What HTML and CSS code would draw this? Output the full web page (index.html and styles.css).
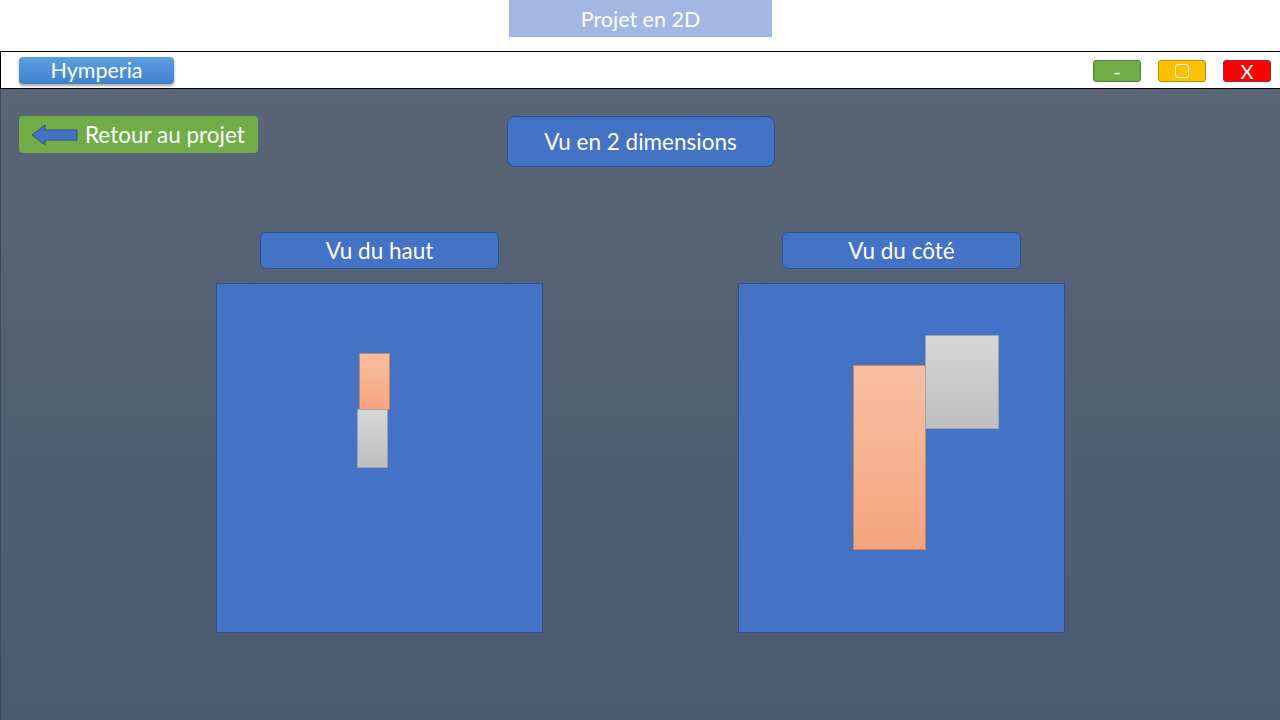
FILE: index.html
```html
<!DOCTYPE html>
<html lang="fr">
<head>
<meta charset="utf-8">
<title>Projet en 2D</title>
<link rel="stylesheet" href="styles.css">
</head>
<body>
<div class="top">
  <div class="page-title">Projet en 2D</div>
</div>
<header class="appbar">
  <div class="brand">Hymperia</div>
  <div class="win-controls">
    <div class="wbtn wbtn-min">-</div>
    <div class="wbtn wbtn-max"><span class="sq"></span></div>
    <div class="wbtn wbtn-close">X</div>
  </div>
</header>
<main class="main">
  <div class="toprow">
    <div class="back">
      <svg class="arrow" width="48" height="22" viewBox="0 0 48 22">
        <path d="M1 11 L14 1 L14 6 L46 6 L46 16 L14 16 L14 21 Z" fill="#4472c4" stroke="#2f528f" stroke-width="1"/>
      </svg>
      <span>Retour au projet</span>
    </div>
    <div class="heading">Vu en 2 dimensions</div>
    <div></div>
  </div>
  <div class="views">
    <section class="view">
      <div class="view-title">Vu du haut</div>
      <div class="canvas">
        <div class="shape orange" style="left:142px;top:69px;width:31px;height:57px"></div>
        <div class="shape gray" style="left:140px;top:125px;width:31px;height:59px"></div>
      </div>
    </section>
    <section class="view">
      <div class="view-title">Vu du côté</div>
      <div class="canvas">
        <div class="shape orange" style="left:114px;top:81px;width:73px;height:185px"></div>
        <div class="shape gray" style="left:186px;top:51px;width:74px;height:94px"></div>
      </div>
    </section>
  </div>
</main>
</body>
</html>
```
FILE: styles.css
```css
html, body {
  margin: 0;
  padding: 0;
  height: 100%;
}
body {
  font-family: "Lato", "Open Sans", sans-serif;
  background: #fff;
  overflow: hidden;
  display: flex;
  flex-direction: column;
}
.top {
  height: 51px;
  display: flex;
  justify-content: center;
}
.page-title {
  width: 263px;
  height: 37px;
  margin-left: 1px;
  background: #a2b7e1;
  color: #fff;
  font-size: 21.5px;
  display: flex;
  align-items: center;
  justify-content: center;
}
.appbar {
  height: 36px;
  border-top: 1px solid #000;
  border-bottom: 1px solid #000;
  border-left: 1px solid #000;
  display: flex;
  align-items: center;
  justify-content: space-between;
  padding: 0 9px 0 18px;
  background: #fff;
}
.brand {
  width: 155px;
  height: 27px;
  margin-top: 0;
  border-radius: 4px;
  background: linear-gradient(#5d9ee0, #3f83cc);
  box-shadow: 0 2px 3px rgba(0,0,0,0.35);
  color: #fff;
  font-size: 21.5px;
  display: flex;
  align-items: center;
  justify-content: center;
}
.win-controls {
  display: flex;
  gap: 17px;
  margin-top: 1px;
}
.wbtn {
  width: 46px;
  height: 20px;
  border-radius: 3px;
  color: #fff;
  font-size: 20px;
  display: flex;
  align-items: center;
  justify-content: center;
}
.wbtn-min { background: #70ad47; border: 1px solid #507e32; }
.wbtn-max { background: #ffc000; border: 1px solid #bc8c00; }
.wbtn-close { background: #ff0000; border: 1px solid #9e2a48; }
.sq {
  width: 12px;
  height: 12px;
  border: 1.5px solid #fff;
  border-radius: 3px;
}
.main {
  flex: 1;
  background: linear-gradient(#5a6577, #4a5a70);
  border-left: 1px solid #3b4a5e;
  padding: 27px 0 0 18px;
  display: flex;
  flex-direction: column;
}
.toprow {
  display: grid;
  grid-template-columns: 1fr 268px 1fr;
  align-items: start;
  padding-right: 18px;
}
.back {
  justify-self: start;
  width: 239px;
  height: 37px;
  border-radius: 4px;
  background: #70ad47;
  color: #fff;
  font-size: 22.5px;
  display: flex;
  align-items: center;
  gap: 6px;
  padding-left: 12px;
  box-sizing: border-box;
}
.arrow { display: block; margin-top: 1px; }
.heading {
  height: 51px;
  box-sizing: border-box;
  border: 1px solid #2f528f;
  border-radius: 8px;
  background: #4472c4;
  color: #fff;
  font-size: 22.5px;
  display: flex;
  align-items: center;
  justify-content: center;
}
.views {
  display: flex;
  justify-content: center;
  gap: 195px;
  margin-top: 65px;
  margin-left: -18px;
}
.view {
  width: 327px;
  display: flex;
  flex-direction: column;
  align-items: center;
  gap: 14px;
}
.view-title {
  width: 239px;
  height: 37px;
  box-sizing: border-box;
  border: 1px solid #2f528f;
  border-radius: 6px;
  background: #4472c4;
  color: #fff;
  font-size: 22.5px;
  display: flex;
  align-items: center;
  justify-content: center;
}
.canvas {
  position: relative;
  width: 327px;
  height: 350px;
  box-sizing: border-box;
  border: 1px solid #2f528f;
  background: #4472c4;
}
.shape {
  position: absolute;
  box-sizing: border-box;
}
.orange {
  background: linear-gradient(#f8bfa1, #f5a57e);
  border: 1px solid #c9835f;
}
.gray {
  background: linear-gradient(#d6d6d6, #bfbfbf);
  border: 1px solid #9aa4b5;
}
```
